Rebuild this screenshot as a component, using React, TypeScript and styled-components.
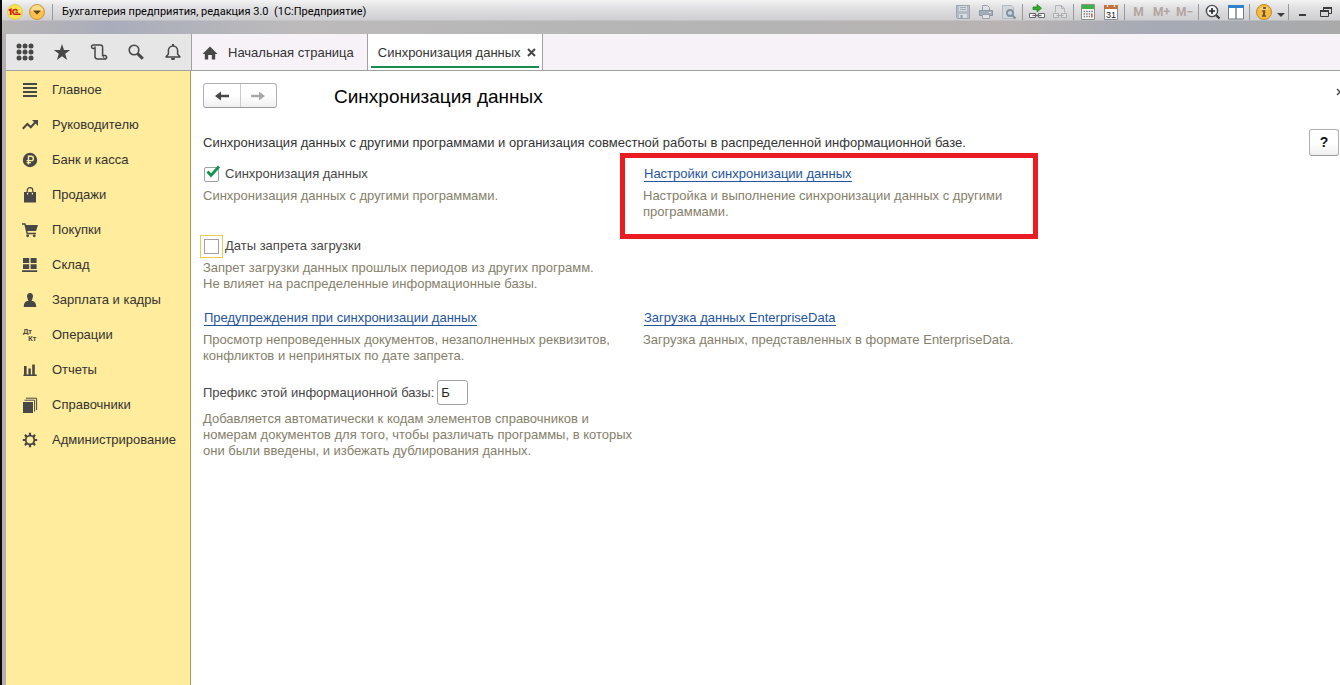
import React from "react";
import styled, { createGlobalStyle, css } from "styled-components";

const ui = `"Liberation Sans", Arial, sans-serif`;

const GlobalStyle = createGlobalStyle`
  * { box-sizing: border-box; }
  html, body, #root { height: 100%; }
  body {
    margin: 0;
    overflow: hidden;
    background: #fff;
    color: #333;
    font: 13px/16px ${ui};
  }
  button { font: inherit; color: inherit; padding: 0; border: 0; background: none; cursor: pointer; }
  svg { display: block; flex: none; }
`;

const Window = styled.div`
  display: flex;
  flex-direction: column;
  min-height: 100%;
  border-left: 2px solid #100c0c;
  background: #b5b0b5;
`;

const TitleBar = styled.header`
  display: flex;
  align-items: flex-start;
  height: 34px;
  padding: 0 3px 0 4px;
  background:
    linear-gradient(#f4f4f4 0, #e2e2e4 7px, #cfcfd1 20px, transparent 21px),
    linear-gradient(90deg, #b9b5b5 0, #a9adbb 8%, #bcbabb 22%, #b4b4b4 55%, #b9b3b3 75%, #a5aab5 86%, #aaa 100%);
`;

const TitleRow = styled.div`
  display: flex;
  align-items: center;
  height: 24px;
`;

const AppTitle = styled.h1`
  flex: 1;
  margin: 0;
  padding-left: 7px;
  font: 11px/24px Roboto, Tahoma, sans-serif;
  color: #000;
  white-space: pre;
`;

const BarButton = styled.button<{ $w?: number }>`
  display: flex;
  align-items: center;
  justify-content: center;
  width: ${(p) => p.$w ?? 23}px;
  height: 24px;
`;

const MemoryButton = styled(BarButton)`
  color: #b3a59f;
  font: bold 12px/24px Roboto, Tahoma, sans-serif;
`;

const BarDivider = styled.span`
  width: 1px;
  height: 16px;
  margin: 0 2px;
  background: #98989a;
`;

const Frame = styled.div`
  flex: 1;
  display: flex;
  flex-direction: column;
  margin-left: 4px;
  background: #fff;
`;

const TopStrip = styled.div`
  display: flex;
  height: 37px;
  border-bottom: 1px solid #a0a0a0;
  background: #f7f2f7;
`;

const QuickTools = styled.div`
  display: flex;
  width: 186px;
  border-right: 1px solid #a0a0a0;
  background: #e6e6e6;
`;

const QuickButton = styled.button`
  flex: 1;
  display: flex;
  align-items: center;
  justify-content: center;
  color: #474747;
`;

const Tab = styled.div<{ $active?: boolean }>`
  display: flex;
  border-right: 1px solid #a0a0a0;
  padding: 0 3px;
  ${(p) => p.$active && css`background: #fff;`}
`;

const TabInner = styled.div<{ $active?: boolean; $right: number }>`
  display: flex;
  align-items: center;
  gap: 6px;
  height: 34px;
  padding: 5px ${(p) => p.$right}px 0 7px;
  border-bottom: 2px solid ${(p) => (p.$active ? "#1a8d4f" : "transparent")};
  color: #474747;
`;

const TabLabel = styled.button`
  display: flex;
  align-items: center;
  gap: 10px;
  white-space: nowrap;
  color: #333;
  svg { color: #474747; }
`;

const Body = styled.div`
  flex: 1;
  display: flex;
`;

const Sidebar = styled.nav`
  width: 185px;
  flex: none;
  padding-top: 1px;
  border-right: 1px solid #a89a4c;
  background: #ffec9c;
`;

const NavItem = styled.a`
  display: flex;
  align-items: center;
  gap: 14px;
  height: 35px;
  padding-left: 16px;
  color: #333;
  text-decoration: none;
  svg { color: #474747; }
`;

const Main = styled.main`
  flex: 1;
  min-width: 0;
  padding: 12px 0 12px 12px;
  overflow: hidden;
`;

const PageHead = styled.div`
  display: flex;
  align-items: center;
  height: 25px;
`;

const NavButtons = styled.div`
  display: flex;
  width: 74px;
  height: 25px;
  border: 1px solid #b0b0b0;
  border-bottom-color: #999;
  border-radius: 3px;
  background: linear-gradient(#fff 50%, #efefef);
`;

const NavButton = styled.button`
  flex: 1;
  display: flex;
  align-items: center;
  justify-content: center;
  color: #474747;
  & + & { border-left: 1px solid #ccc; color: #a8a8a8; }
`;

const PageTitle = styled.h2`
  flex: 1;
  margin: 0 0 0 57px;
  padding-top: 2px;
  font: 19px/24px ${ui};
  color: #000;
`;

const CloseButton = styled.button`
  margin: 0 -4px 8px 0;
  color: #474747;
`;

const IntroRow = styled.div`
  display: flex;
  align-items: center;
  justify-content: space-between;
  height: 28px;
  margin: 20px 1px 6px 0;
`;

const Intro = styled.p`
  margin: 0;
  padding-top: 2px;
`;

const HelpButton = styled.button`
  width: 30px;
  height: 27px;
  border: 1px solid #b0b0b0;
  border-bottom-color: #999;
  border-radius: 3px;
  background: linear-gradient(#fff 50%, #efefef);
  color: #111;
  font: bold 14px/24px ${ui};
`;

const Settings = styled.div`
  display: grid;
  grid-template-columns: 440px minmax(0, 440px);
  row-gap: 14px;
`;

const Setting = styled.section`
  position: relative;
  min-height: 58px;
`;

const Line = styled.div`
  display: flex;
  align-items: center;
  height: 24px;
  padding-left: 1px;
`;

const Hint = styled.p`
  margin: 2px 0 0;
  color: #85806a;
  white-space: pre-line;
`;

const Link = styled.a`
  border-bottom: 1px solid #2454a0;
  line-height: 14px;
  color: #2454a0;
  text-decoration: none;
`;

const CheckLabel = styled.label`
  position: relative;
  display: flex;
  align-items: center;
  gap: 6px;
  color: #474747;
  svg {
    position: absolute;
    left: 2px;
    top: -1px;
    visibility: hidden;
    pointer-events: none;
  }
  input:checked + svg { visibility: visible; }
`;

const Checkbox = styled.input<{ $focused?: boolean }>`
  appearance: none;
  width: 15px;
  height: 15px;
  margin: 0;
  border: 1px solid #a0a0a0;
  border-radius: 2px;
  background: #fff;
  ${(p) => p.$focused && css`
    border-radius: 0;
    outline: 1px solid #edc94c;
    outline-offset: 3px;
  `}
`;

const PrefixRow = styled.div`
  display: flex;
  align-items: center;
  gap: 3px;
  height: 29px;
  margin-bottom: 4px;
  color: #474747;
`;

const PrefixInput = styled.input`
  width: 31px;
  height: 25px;
  padding: 0 3px;
  border: 1px solid #a0a0a0;
  border-radius: 3px;
  font: 13px/16px ${ui};
  color: #222;
`;

const Highlight = styled.div`
  position: absolute;
  left: -23px;
  top: -9px;
  width: 418px;
  height: 86px;
  border: 5px solid #e91c24;
  pointer-events: none;
`;

const Icon = ({ s = 16, w, children }: { s?: number; w?: number; children: React.ReactNode }) => (
  <svg width={w ?? s} height={s} viewBox={`0 0 ${w ?? s} ${s}`} fill="currentColor" aria-hidden="true">
    {children}
  </svg>
);

const stroke = (width: number) => ({ fill: "none", stroke: "currentColor", strokeWidth: width });

const LogoIcon = () => (
  <Icon s={18}>
    <circle cx="9" cy="9" r="7.5" fill="#ffe34d" stroke="#e6c85a" />
    <path d="M2.8 7.6 L4.8 6.4 V12" fill="none" stroke="#d0161b" strokeWidth="1.7" />
    <path d="M11.4 7.8 A2.4 2.4 0 1 0 9.4 11.3 H14.6" fill="none" stroke="#d0161b" strokeWidth="1.5" />
    <path d="M9.4 9.3 H12" stroke="#d0161b" strokeWidth="1.2" />
  </Icon>
);

const MenuIcon = () => (
  <Icon s={18}>
    <circle cx="9" cy="9" r="7.5" fill="#fdc04a" stroke="#c9953b" />
    <path d="M3 8 A6 6 0 0 1 15 8 Z" fill="#ffdc8a" />
    <path d="M5 7.5 H13 L9 11.5 Z" fill="#5b4217" />
  </Icon>
);

const SaveIcon = () => (
  <Icon>
    <path d="M1.5 1.5 H14.5 V14.5 H2.5 L1.5 13.5 Z" fill="#b3bcc5" stroke="#9aa5b1" />
    <path d="M4 2 H12 V7 H4 Z" fill="#d5d9de" />
    <path d="M5 3.5 H11 M5 5.5 H11" stroke="#a3adb8" />
    <path d="M4 10 H12 V14 H4 Z" fill="#d9dde0" />
    <path d="M5.5 11 H7.5 V14 H5.5 Z" fill="#909ca9" />
  </Icon>
);

const PrintIcon = () => (
  <Icon>
    <path d="M4.5 6 V1.5 H9.5 L11.5 3.5 V6" fill="#dfe2e5" stroke="#97a2ad" />
    <path d="M1.5 6.5 H14.5 V11.5 H1.5 Z" fill="#a4aeb8" stroke="#8a97a4" />
    <path d="M4.5 10.5 H11.5 V14.5 H4.5 Z" fill="#e2e4e6" stroke="#97a2ad" />
    <path d="M11 8.5 H13" stroke="#e8e8e8" />
  </Icon>
);

const FollowLinkIcon = () => (
  <Icon>
    <path d="M3.5 8.5 V1.5 H9.5 L12.5 4.5 V8.5" fill="#dcdee0" stroke="#b0b4b8" />
    <path d="M9.5 1.5 V4.5 H12.5" fill="none" stroke="#b0b4b8" />
    <path d="M1.5 9.5 H6.5 V13.5 H1.5 Z M9.5 9.5 H14.5 V13.5 H9.5 Z" fill="#dfe0e2" stroke="#aaaeb2" />
    <path d="M4.5 11.5 H11.5" stroke="#aaaeb2" />
  </Icon>
);

const PreviewIcon = () => (
  <Icon>
    <path d="M1.5 1.5 H10.5 L12.5 3.5 V14.5 H1.5 Z" fill="#d4d7da" stroke="#b3bac1" />
    <circle cx="9" cy="9" r="3" fill="#c8d4dc" stroke="#7f909e" strokeWidth="1.8" />
    <path d="M11 11 L14.5 14.5" stroke="#7f909e" strokeWidth="2.2" />
  </Icon>
);

const LinkIcon = () => (
  <Icon>
    <path d="M4 3 H8 V0.5 L12.5 4.2 L8 8 V5.5 H4 Z" fill="#2fae28" stroke="#167a16" strokeWidth="0.7" />
    <path d="M0.5 9.5 H6.5 V13.5 H0.5 Z M9.5 9.5 H15.5 V13.5 H9.5 Z" fill="#fff" stroke="#62686e" />
    <path d="M3.5 11.5 H12.5" stroke="#62686e" strokeWidth="1.4" />
  </Icon>
);

const CalcIcon = () => (
  <Icon>
    <path d="M1.5 0.5 H14.5 V15.5 H1.5 Z" fill="#fafafa" stroke="#8a908a" />
    <path d="M2 1 H14 V5 H2 Z" fill="#3fb044" />
    <path d="M3.5 7.5 H13 M3.5 10 H10 M3.5 12.5 H10" stroke="#7d8285" strokeWidth="1.4" strokeDasharray="1.6 1" />
    <path d="M11 9.5 H12.6 V13.5 H11 Z" fill="#d55b4b" />
  </Icon>
);

const CalendarIcon = () => (
  <Icon>
    <path d="M1.5 1.5 H14.5 V15.5 H1.5 Z" fill="#fff" stroke="#8d8d94" />
    <path d="M1 1 H15 V5 H1 Z" fill="#c4713f" />
    <path d="M4.5 0 V3 M11.5 0 V3" stroke="#f1e4d8" strokeWidth="1.4" />
    <text x="8" y="13.5" textAnchor="middle" fontFamily="Liberation Sans, sans-serif" fontSize="9" fill="#222">31</text>
  </Icon>
);

const ZoomIcon = () => (
  <Icon>
    <circle cx="7" cy="7" r="5.6" fill="#f4f4f4" stroke="#4a4f55" strokeWidth="1.4" />
    <path d="M4 7 H10 M7 4 V10" stroke="#222" strokeWidth="1.6" />
    <path d="M11 11 L14.5 14.5" stroke="#33373b" strokeWidth="2.2" />
  </Icon>
);

const PanesIcon = () => (
  <Icon>
    <path d="M0.5 1.5 H15.5 V15 H0.5 Z" fill="#fff" stroke="#707a88" />
    <path d="M0 1 H16 V4 H0 Z" fill="#2f82cf" />
    <path d="M8 4 V15" stroke="#707a88" strokeWidth="1.4" />
  </Icon>
);

const InfoIcon = () => (
  <Icon>
    <circle cx="8" cy="8" r="7.5" fill="#fbb93c" stroke="#b98a35" />
    <path d="M3 6 A5.4 5.4 0 0 1 13 6 Z" fill="#ffd98a" opacity=".7" />
    <path d="M7.2 3 H9.8 V5 H7.2 Z M5.8 6.3 H9.4 L8.8 11.3 H10 V12.7 H6 V11.3 H6.8 L7.2 7.6 H5.8 Z" fill="#5c5340" />
  </Icon>
);

const DropIcon = () => (
  <Icon s={16} w={10}>
    <path d="M1 9 H9 L5 13 Z" fill="#3c3f42" />
  </Icon>
);

const MinimizeIcon = () => (
  <Icon>
    <path d="M4 10 H11 V12 H4 Z" fill="#3a3a3a" />
  </Icon>
);

const RestoreIcon = () => (
  <Icon>
    <path d="M5.5 6.5 V3.5 H13.5 V9.5 H11" fill="none" stroke="#3a3a3a" />
    <path d="M5 3 H14 V5 H5 Z" fill="#3a3a3a" />
    <path d="M2.5 7 H10.5 V12.5 H2.5 Z" fill="none" stroke="#3a3a3a" />
    <path d="M2 6 H11 V8 H2 Z" fill="#3a3a3a" />
  </Icon>
);

const dots = [3, 9, 15];
const GridIcon = () => (
  <Icon s={18}>
    {dots.flatMap((y) => dots.map((x) => <circle key={`${x}-${y}`} cx={x} cy={y} r="2.5" />))}
  </Icon>
);

const StarIcon = () => (
  <Icon s={18}>
    <path d="M9 1 L11 7 H17.2 L12.2 10.8 L14.1 17 L9 13.2 L3.9 17 L5.8 10.8 L0.8 7 H7 Z" />
  </Icon>
);

const ScrollIcon = () => (
  <Icon s={18}>
    <path d="M4.8 5.4 H3.2 A1.7 1.7 0 1 1 3.2 2 H10.4 Q12.6 2 12.6 4.2 V12.4 H14.8 A1.8 1.8 0 1 1 14.8 16 H7.4 Q5 16 5 13.6 V3.6" {...stroke(1.5)} />
    <path d="M12.8 12.4 Q13.4 14.4 14.8 16" {...stroke(1)} />
  </Icon>
);

const SearchIcon = () => (
  <Icon s={18}>
    <circle cx="7" cy="7" r="4.8" {...stroke(1.6)} />
    <path d="M10.6 10.6 L15.8 15.8" {...stroke(3)} />
  </Icon>
);

const BellIcon = () => (
  <Icon s={18}>
    <path d="M2 14 H16 L13.6 11 V7.5 A4.6 4.6 0 0 0 4.4 7.5 V11 Z" strokeLinejoin="round" {...stroke(1.5)} />
    <path d="M8 1 H10 V3 H8 Z M7 15 H11 L10.4 17 H7.6 Z" />
  </Icon>
);

const HomeIcon = () => (
  <Icon>
    <path d="M8 1.5 L15.5 9 H13.2 V14.5 H9.8 V10 H6.2 V14.5 H2.8 V9 H0.5 Z" />
  </Icon>
);

const CrossIcon = () => (
  <Icon s={9}>
    <path d="M1 1 L8 8 M8 1 L1 8" {...stroke(2)} />
  </Icon>
);

const ThinCrossIcon = () => (
  <Icon s={8}>
    <path d="M1 1 L7 7 M7 1 L1 7" {...stroke(1.4)} />
  </Icon>
);

const ArrowIcon = ({ right }: { right?: boolean }) => (
  <Icon s={10} w={14}>
    {right ? (
      <path d="M0 3.7 H8 V0.5 L14 5 L8 9.5 V6.3 H0 Z" />
    ) : (
      <path d="M14 3.7 H6 V0.5 L0 5 L6 9.5 V6.3 H14 Z" />
    )}
  </Icon>
);

const CheckIcon = () => (
  <Icon s={14} w={15}>
    <path d="M1.5 6.5 L5 10.5 L13 1.5" fill="none" stroke="#12924c" strokeWidth="2.8" />
  </Icon>
);

const navItems: { label: string; icon: React.ReactNode }[] = [
  { label: "Главное", icon: <path d="M1 1 H15 V3 H1 Z M1 5 H15 V7 H1 Z M1 9 H15 V11 H1 Z M1 13 H15 V15 H1 Z" /> },
  {
    label: "Руководителю",
    icon: (
      <>
        <path d="M0.8 11.8 L5.4 7 L8.8 10.2 L13.5 5" {...stroke(2)} />
        <path d="M10 3 H16 V9 Z" />
      </>
    ),
  },
  {
    label: "Банк и касса",
    icon: (
      <>
        <circle cx="8" cy="8" r="7.2" />
        <path d="M6.5 12.5 V4.2 H9.2 A2.1 2.1 0 0 1 9.2 8.6 H4.6 M4.6 10.6 H9" fill="none" stroke="#ffec9c" strokeWidth="1.4" />
      </>
    ),
  },
  {
    label: "Продажи",
    icon: (
      <>
        <path d="M2 5 H5 V7.5 H6.2 V5 H9.8 V7.5 H11 V5 H14 V15.5 H2 Z" />
        <path d="M5.2 6 V3.5 A2.8 2.8 0 0 1 10.8 3.5 V6" {...stroke(1.2)} />
      </>
    ),
  },
  {
    label: "Покупки",
    icon: (
      <>
        <path d="M3 3 H16 L14 9 H4.8 Z" />
        <path d="M0 2 H3 L5.2 11.5 H14" {...stroke(1.4)} />
        <circle cx="5.6" cy="13.8" r="1.4" />
        <circle cx="12.2" cy="13.8" r="1.4" />
      </>
    ),
  },
  { label: "Склад", icon: <path d="M1 1 H7.2 V6 H1 Z M8.6 1 H14.6 V6 H8.6 Z M1 7.2 H7.2 V12 H1 Z M8.6 7.2 H14.6 V12 H8.6 Z M0 13.2 H15.2 V15 H0 Z" /> },
  {
    label: "Зарплата и кадры",
    icon: <path d="M8 1 C10 1 11 2.4 11 4.2 C11 6 9.8 7.8 9.6 8.8 C12.6 9.4 14.2 10.6 14.2 15 H1.8 C1.8 10.6 3.4 9.4 6.4 8.8 C6.2 7.8 5 6 5 4.2 C5 2.4 6 1 8 1 Z" />,
  },
  {
    label: "Операции",
    icon: (
      <g fontFamily="Noto Sans, sans-serif" fontWeight="bold" fontSize="7">
        <text x="1" y="7">Дт</text>
        <text x="6" y="14">Кт</text>
      </g>
    ),
  },
  { label: "Отчеты", icon: <path d="M2 4 H4.6 V12.6 H6.4 V6.5 H8.8 V12.6 H10.2 V2.5 H12.8 V12.6 H14.8 V14 H1.4 V12.6 H2 Z" /> },
  {
    label: "Справочники",
    icon: (
      <>
        <path d="M1 5 H11 V16 H1 Z" />
        <path d="M2.5 3.2 H12.6 V14.5 M4 1.2 H14.6 V13" {...stroke(1)} />
      </>
    ),
  },
  {
    label: "Администрирование",
    icon: (
      <>
        <circle cx="8" cy="8" r="4.3" {...stroke(1.8)} />
        <path d="M8 0.8 V4 M8 12 V15.2 M0.8 8 H4 M12 8 H15.2 M2.9 2.9 L5.1 5.1 M10.9 10.9 L13.1 13.1 M13.1 2.9 L10.9 5.1 M5.1 10.9 L2.9 13.1" {...stroke(2.2)} />
      </>
    ),
  },
];

const quickTools = [
  { label: "Меню функций", icon: <GridIcon /> },
  { label: "Избранное", icon: <StarIcon /> },
  { label: "История", icon: <ScrollIcon /> },
  { label: "Поиск", icon: <SearchIcon /> },
  { label: "Оповещения", icon: <BellIcon /> },
];

export default function App() {
  return (
    <Window>
      <GlobalStyle />
      <TitleBar>
        <TitleRow>
          <BarButton $w={18} aria-label="1С"><LogoIcon /></BarButton>
          <BarButton $w={26} aria-label="Главное меню"><MenuIcon /></BarButton>
          <BarDivider />
        </TitleRow>
        <AppTitle>{"Бухгалтерия предприятия, редакция 3.0  (1С:Предприятие)"}</AppTitle>
        <TitleRow>
          <BarButton aria-label="Сохранить"><SaveIcon /></BarButton>
          <BarButton aria-label="Печать"><PrintIcon /></BarButton>
          <BarButton aria-label="Просмотр"><PreviewIcon /></BarButton>
          <BarDivider />
          <BarButton aria-label="Получить ссылку"><LinkIcon /></BarButton>
          <BarButton aria-label="Перейти по ссылке"><FollowLinkIcon /></BarButton>
          <BarDivider />
          <BarButton aria-label="Калькулятор"><CalcIcon /></BarButton>
          <BarButton aria-label="Календарь"><CalendarIcon /></BarButton>
          <BarDivider />
          <MemoryButton>M</MemoryButton>
          <MemoryButton>M+</MemoryButton>
          <MemoryButton>M−</MemoryButton>
          <BarDivider />
          <BarButton aria-label="Масштаб"><ZoomIcon /></BarButton>
          <BarButton aria-label="Панели"><PanesIcon /></BarButton>
          <BarDivider />
          <BarButton $w={24} aria-label="О программе"><InfoIcon /></BarButton>
          <BarButton $w={10} aria-label="Ещё"><DropIcon /></BarButton>
          <BarDivider />
          <BarButton aria-label="Свернуть"><MinimizeIcon /></BarButton>
          <BarButton aria-label="Восстановить"><RestoreIcon /></BarButton>
        </TitleRow>
      </TitleBar>

      <Frame>
        <TopStrip>
          <QuickTools>
            {quickTools.map((t) => (
              <QuickButton key={t.label} aria-label={t.label}>{t.icon}</QuickButton>
            ))}
          </QuickTools>
          <Tab>
            <TabInner $right={10}>
              <TabLabel><HomeIcon />Начальная страница</TabLabel>
            </TabInner>
          </Tab>
          <Tab $active>
            <TabInner $active $right={3}>
              <TabLabel>Синхронизация данных</TabLabel>
              <button aria-label="Закрыть вкладку"><CrossIcon /></button>
            </TabInner>
          </Tab>
        </TopStrip>

        <Body>
          <Sidebar>
            {navItems.map((n) => (
              <NavItem key={n.label} href="#">
                <Icon>{n.icon}</Icon>
                {n.label}
              </NavItem>
            ))}
          </Sidebar>

          <Main>
            <PageHead>
              <NavButtons>
                <NavButton aria-label="Назад"><ArrowIcon /></NavButton>
                <NavButton aria-label="Вперед"><ArrowIcon right /></NavButton>
              </NavButtons>
              <PageTitle>Синхронизация данных</PageTitle>
              <CloseButton aria-label="Закрыть"><ThinCrossIcon /></CloseButton>
            </PageHead>

            <IntroRow>
              <Intro>
                Синхронизация данных с другими программами и организация совместной работы в распределенной информационной базе.
              </Intro>
              <HelpButton aria-label="Справка">?</HelpButton>
            </IntroRow>

            <Settings>
              <Setting>
                <Line>
                  <CheckLabel>
                    <Checkbox type="checkbox" defaultChecked />
                    <CheckIcon />
                    Синхронизация данных
                  </CheckLabel>
                </Line>
                <Hint>Синхронизация данных с другими программами.</Hint>
              </Setting>
              <Setting>
                <Line><Link href="#">Настройки синхронизации данных</Link></Line>
                <Hint>{"Настройка и выполнение синхронизации данных с другими\nпрограммами."}</Hint>
                <Highlight />
              </Setting>

              <Setting>
                <Line>
                  <CheckLabel>
                    <Checkbox type="checkbox" $focused />
                    <CheckIcon />
                    Даты запрета загрузки
                  </CheckLabel>
                </Line>
                <Hint>{"Запрет загрузки данных прошлых периодов из других программ.\nНе влияет на распределенные информационные базы."}</Hint>
              </Setting>
              <span />

              <Setting>
                <Line><Link href="#">Предупреждения при синхронизации данных</Link></Line>
                <Hint>{"Просмотр непроведенных документов, незаполненных реквизитов,\nконфликтов и непринятых по дате запрета."}</Hint>
              </Setting>
              <Setting>
                <Line><Link href="#">Загрузка данных EnterpriseData</Link></Line>
                <Hint>Загрузка данных, представленных в формате EnterpriseData.</Hint>
              </Setting>

              <Setting>
                <PrefixRow>
                  <label htmlFor="prefix">Префикс этой информационной базы:</label>
                  <PrefixInput id="prefix" defaultValue="Б" />
                </PrefixRow>
                <Hint>{"Добавляется автоматически к кодам элементов справочников и\nномерам документов для того, чтобы различать программы, в которых\nони были введены, и избежать дублирования данных."}</Hint>
              </Setting>
            </Settings>
          </Main>
        </Body>
      </Frame>
    </Window>
  );
}
